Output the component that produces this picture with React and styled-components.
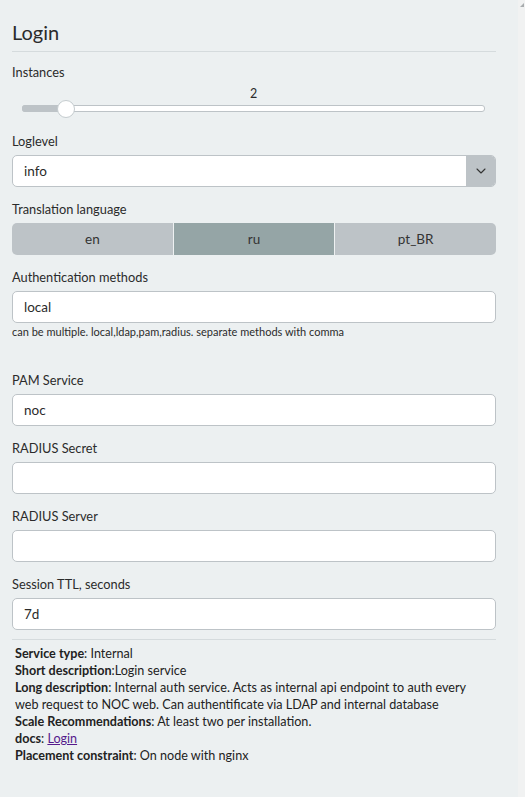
import React from 'react'
import styled, { createGlobalStyle } from 'styled-components'
import { ChevronDown } from 'lucide-react'

const GlobalStyle = createGlobalStyle`
  html, body {
    margin: 0;
    padding: 0;
    background: #ecf0f1;
  }
  body {
    font-family: Lato, "Noto Sans", sans-serif;
    color: #2b2b2b;
  }
`

const Page = styled.div`
  display: flex;
  min-height: 797px;
  background: #ecf0f1;
`

const Panel = styled.div`
  flex: 1;
  padding: 20px 22px 0 12px;
  display: flex;
  flex-direction: column;
`

const ScrollStrip = styled.div`
  width: 7px;
  background: #f1f2f2;
  position: relative;

  &::before {
    content: '';
    position: absolute;
    top: 3px;
    right: 1px;
    border-left: 4px solid transparent;
    border-bottom: 4px solid #a8acae;
  }
`

const Title = styled.h1`
  margin: 0;
  font-size: 20px;
  font-weight: 400;
  line-height: 24px;
  padding-bottom: 7px;
  border-bottom: 1px solid #d5dbdd;
  color: #2b2b2b;
`

const Label = styled.div`
  font-size: 12.8px;
  line-height: 16px;
  margin-top: ${p => p.$top || 14}px;
  margin-bottom: 6px;
  color: #2b2b2b;
`

const SliderWrap = styled.div`
  display: flex;
  flex-direction: column;
  padding: 0 11px 0 10px;
  margin-bottom: 7px;
`

const SliderValue = styled.div`
  font-size: 12.5px;
  line-height: 14px;
  margin-top: 1px;
  text-align: center;
`

const Track = styled.div`
  position: relative;
  margin-top: 4px;
  height: 5px;
  border: 1px solid #bdc3c7;
  border-radius: 3px;
  background: #fff;
`

const TrackFill = styled.div`
  position: absolute;
  left: -1px;
  top: -1px;
  bottom: -1px;
  background: #bdc3c7;
  border-radius: 3px 0 0 3px;
`

const Thumb = styled.div`
  position: absolute;
  top: 50%;
  width: 16px;
  height: 16px;
  margin-left: -8px;
  margin-top: -9px;
  border-radius: 50%;
  background: #fff;
  border: 1px solid #c5cccf;
`

const SelectBox = styled.div`
  display: flex;
  height: 32px;
  box-sizing: border-box;
  border: 1px solid #bdc3c7;
  border-radius: 5px;
  background: #fff;
  overflow: hidden;
`

const SelectText = styled.div`
  flex: 1;
  display: flex;
  align-items: center;
  padding-left: 11px;
  font-size: 13.5px;
`

const SelectArrow = styled.div`
  width: 29px;
  display: flex;
  align-items: center;
  justify-content: center;
  background: #bdc3c7;
  color: #333;
`

const Segments = styled.div`
  display: flex;
  height: 32px;
  border-radius: 5px;
  overflow: hidden;
`

const Segment = styled.div`
  flex: 1;
  display: flex;
  align-items: center;
  justify-content: center;
  font-size: 13.5px;
  background: ${p => (p.$active ? '#95a5a6' : '#bdc3c7')};
  color: #333;
  & + & {
    border-left: 1px solid #eef1f2;
  }
`

const Input = styled.input`
  display: block;
  width: 100%;
  height: 32px;
  box-sizing: border-box;
  border: 1px solid #bdc3c7;
  border-radius: 5px;
  background: #fff;
  padding: 0 11px;
  font-family: Lato, "Noto Sans", sans-serif;
  font-size: 13.5px;
  color: #2b2b2b;
  outline: none;
`

const Help = styled.div`
  font-size: 11px;
  line-height: 14px;
  margin-top: 2px;
  margin-bottom: 19px;
  color: #2b2b2b;
`

const Divider = styled.hr`
  border: none;
  border-top: 1px solid #d5dbdd;
  margin: 9px 0 0;
`

const Info = styled.div`
  padding: 5px 0 0 3px;
  font-size: 12.6px;
  line-height: 17px;
  color: #222;

  b {
    font-weight: 700;
  }
  a {
    color: #551a8b;
    text-decoration: underline;
  }
`

const InfoLine = styled.div`
  display: block;
`

const instances = { value: 2, min: 1, max: 12 }

const fields = [
  { label: 'PAM Service', value: 'noc' },
  { label: 'RADIUS Secret', value: '' },
  { label: 'RADIUS Server', value: '' },
  { label: 'Session TTL, seconds', value: '7d' },
]

export default function App() {
  const pct = ((instances.value - instances.min) / (instances.max - instances.min)) * 100
  return (
    <Page>
      <GlobalStyle />
      <Panel>
        <Title>Login</Title>

        <Label $top={12}>Instances</Label>
        <SliderWrap>
          <SliderValue>{instances.value}</SliderValue>
          <Track>
            <TrackFill style={{ width: `${pct}%` }} />
            <Thumb style={{ left: `${pct}%` }} />
          </Track>
        </SliderWrap>

        <Label>Loglevel</Label>
        <SelectBox>
          <SelectText>info</SelectText>
          <SelectArrow>
            <ChevronDown size={16} strokeWidth={1.6} />
          </SelectArrow>
        </SelectBox>

        <Label>Translation language</Label>
        <Segments>
          <Segment>en</Segment>
          <Segment $active>ru</Segment>
          <Segment>pt_BR</Segment>
        </Segments>

        <Label>Authentication methods</Label>
        <Input defaultValue="local" />
        <Help>can be multiple. local,ldap,pam,radius. separate methods with comma</Help>

        {fields.map(f => (
          <React.Fragment key={f.label}>
            <Label>{f.label}</Label>
            <Input defaultValue={f.value} />
          </React.Fragment>
        ))}

        <Divider />
        <Info>
          <InfoLine><b>Service type</b>: Internal</InfoLine>
          <InfoLine><b>Short description</b>:Login service</InfoLine>
          <InfoLine>
            <b>Long description</b><span>: Internal auth service. Acts as internal api endpoint to auth every</span>
          </InfoLine>
          <InfoLine>web request to NOC web. Can authentificate via LDAP and internal database</InfoLine>
          <InfoLine><b>Scale Recommendations</b>: At least two per installation.</InfoLine>
          <InfoLine><b>docs</b>: <a href="#login">Login</a></InfoLine>
          <InfoLine><b>Placement constraint</b>: On node with nginx</InfoLine>
        </Info>
      </Panel>
      <ScrollStrip />
    </Page>
  )
}
